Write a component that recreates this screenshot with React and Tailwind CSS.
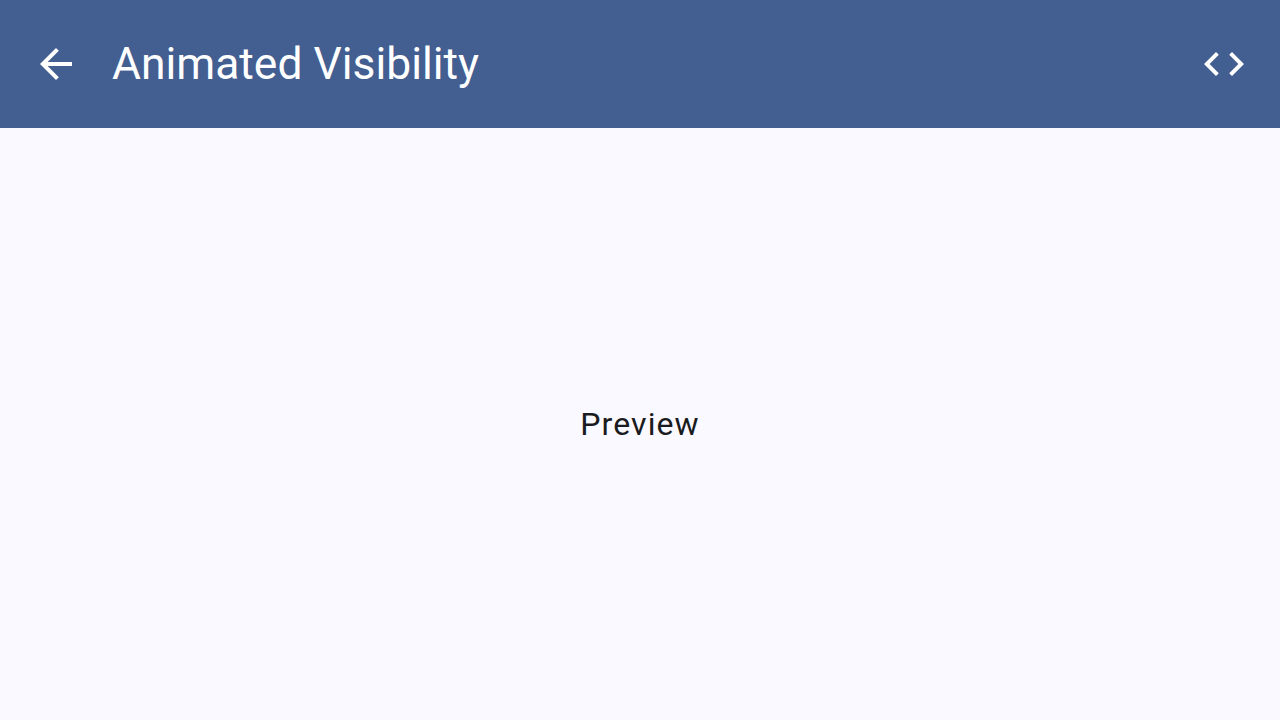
export default function App() {
  return (
    <div className="w-[1280px] h-[720px] flex flex-col bg-[#f9f9ff]" style={{ fontFamily: "Roboto, 'Noto Sans', sans-serif" }}>
      <header className="h-[128px] bg-[#435e91] flex items-center px-[32px] shrink-0">
        <div className="w-[48px] h-[48px] flex items-center justify-center">
          <svg width="48" height="48" viewBox="0 0 24 24" fill="#ffffff">
            <path d="M20 11H7.83l5.59-5.59L12 4l-8 8 8 8 1.41-1.41L7.83 13H20v-2z" />
          </svg>
        </div>
        <h1 className="ml-[32px] text-[44.4px] leading-none text-white font-normal flex-1">Animated Visibility</h1>
        <div className="w-[48px] h-[48px] flex items-center justify-center">
          <svg width="48" height="48" viewBox="0 0 24 24" fill="#ffffff">
            <path d="M9.4 16.6L4.8 12l4.6-4.6L8 6l-6 6 6 6 1.4-1.4zm5.2 0l4.6-4.6-4.6-4.6L16 6l6 6-6 6-1.4-1.4z" />
          </svg>
        </div>
      </header>
      <main className="flex-1 flex items-center justify-center">
        <span className="text-[32px] text-[#1a1b20] tracking-[1.1px] leading-none">Preview</span>
      </main>
    </div>
  );
}
